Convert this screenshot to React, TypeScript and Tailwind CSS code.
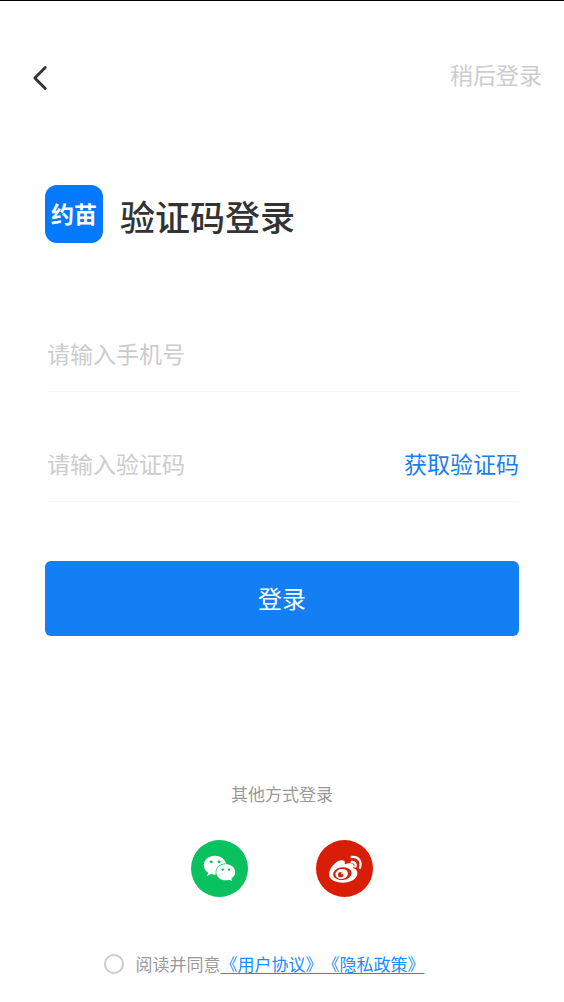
import React, { useState } from "react";
import { FaWeixin } from "react-icons/fa";

const fieldRow = "ml-0.5 flex items-center border-b border-[#f7f7f7] pb-5";
const fieldInput =
  "h-9 w-full min-w-0 flex-1 bg-transparent text-[23px] text-[#333333] outline-none placeholder:text-[#cccccc]";

const WeiboIcon: React.FC = () => (
  <svg className="h-10 w-11" viewBox="0 0 132 120" fill="none">
    <path
      fill="#fff"
      d="M54 34c9-2 14 3 11 12 9-4 25-6 27 3 1 4-1 6-1 9 9 2 13 8 12 17-2 16-21 26-43 26-24 0-42-9-42-25 0-17 19-40 36-42Z"
    />
    <ellipse cx="58" cy="74" rx="28" ry="19" fill="#d81e06" transform="rotate(-6 58 74)" />
    <ellipse cx="56" cy="75" rx="19" ry="15" fill="#fff" transform="rotate(-12 56 75)" />
    <circle cx="53" cy="77" r="8" fill="#d81e06" />
    <circle cx="57" cy="73" r="3" fill="#fff" />
    <path
      stroke="#fff"
      strokeWidth="7"
      strokeLinecap="round"
      d="M86 24c19-3 31 13 25 32M86 39c9-1 14 6 11 14"
    />
  </svg>
);

const Header: React.FC = () => (
  <header className="flex items-center justify-between pt-[55px] pr-[22px] pl-7">
    <button type="button" aria-label="返回" className="pt-2">
      <svg
        className="h-7 w-6"
        viewBox="0 0 24 28"
        fill="none"
        stroke="#333333"
        strokeWidth="2.8"
        strokeLinecap="round"
        strokeLinejoin="round"
      >
        <path d="M17.3 3.6 6.8 14l10.5 10.6" />
      </svg>
    </button>
    <button type="button" className="text-[23px] leading-9 text-[#cccccc]">
      稍后登录
    </button>
  </header>
);

const Title: React.FC = () => (
  <div className="mt-[93px] flex items-center gap-[17px]">
    <div className="flex size-[58px] items-center justify-center rounded-xl bg-[#0479fb] pb-0.5 text-[23px] font-bold text-white">
      约苗
    </div>
    <h1 className="pt-1 text-[35px] leading-[48px] font-medium text-[#333333]">验证码登录</h1>
  </div>
);

const LoginForm: React.FC = () => {
  const [phone, setPhone] = useState("");
  const [code, setCode] = useState("");

  const handleSubmit = (e: React.FormEvent) => {
    e.preventDefault();
  };

  return (
    <form onSubmit={handleSubmit} className="mt-[92px] flex flex-col">
      <div className={fieldRow}>
        <input
          type="tel"
          aria-label="手机号"
          placeholder="请输入手机号"
          className={fieldInput}
          value={phone}
          onChange={(e) => setPhone(e.target.value)}
        />
      </div>
      <div className={`${fieldRow} mt-[53px]`}>
        <input
          type="text"
          aria-label="验证码"
          placeholder="请输入验证码"
          className={fieldInput}
          value={code}
          onChange={(e) => setCode(e.target.value)}
        />
        <button type="button" className="text-[23px] leading-9 text-[#147ff2]">
          获取验证码
        </button>
      </div>
      <button
        type="submit"
        className="mt-[59px] h-[75px] w-full rounded-md bg-[#147ff2] pb-0.5 text-2xl text-white"
      >
        登录
      </button>
    </form>
  );
};

const OtherLogin: React.FC = () => (
  <section className="mt-36 flex flex-col items-center">
    <h2 className="text-[17px] leading-7 text-[#999999]">其他方式登录</h2>
    <div className="mt-8 flex gap-[68px]">
      <button
        type="button"
        aria-label="微信登录"
        className="flex size-[57px] items-center justify-center rounded-full bg-[#0ac160] text-white"
      >
        <FaWeixin size={33} />
      </button>
      <button
        type="button"
        aria-label="微博登录"
        className="flex size-[57px] items-center justify-center rounded-full bg-[#d81e06]"
      >
        <WeiboIcon />
      </button>
    </div>
  </section>
);

const Agreement: React.FC = () => {
  const [agreed, setAgreed] = useState(false);

  return (
    <div className="mt-[53px] flex items-center justify-center pr-9 text-[17px] leading-7 text-[#999999]">
      <input
        id="agree"
        type="checkbox"
        className="mr-3 size-5 appearance-none rounded-full border-2 border-[#cccccc] checked:border-[#147ff2] checked:bg-[#147ff2]"
        checked={agreed}
        onChange={(e) => setAgreed(e.target.checked)}
      />
      <label htmlFor="agree">阅读并同意</label>
      <a href="#user" className="text-[#1a8cff] underline underline-offset-2">
        《用户协议》
      </a>
      <a href="#privacy" className="text-[#1a8cff] underline underline-offset-2">
        《隐私政策》
      </a>
    </div>
  );
};

const App: React.FC = () => (
  <div className="min-h-screen border-t border-black bg-white pb-6 font-['Noto_Sans_CJK_SC',sans-serif]">
    <Header />
    <main className="px-[45px]">
      <Title />
      <LoginForm />
      <OtherLogin />
      <Agreement />
    </main>
  </div>
);

export default App;
